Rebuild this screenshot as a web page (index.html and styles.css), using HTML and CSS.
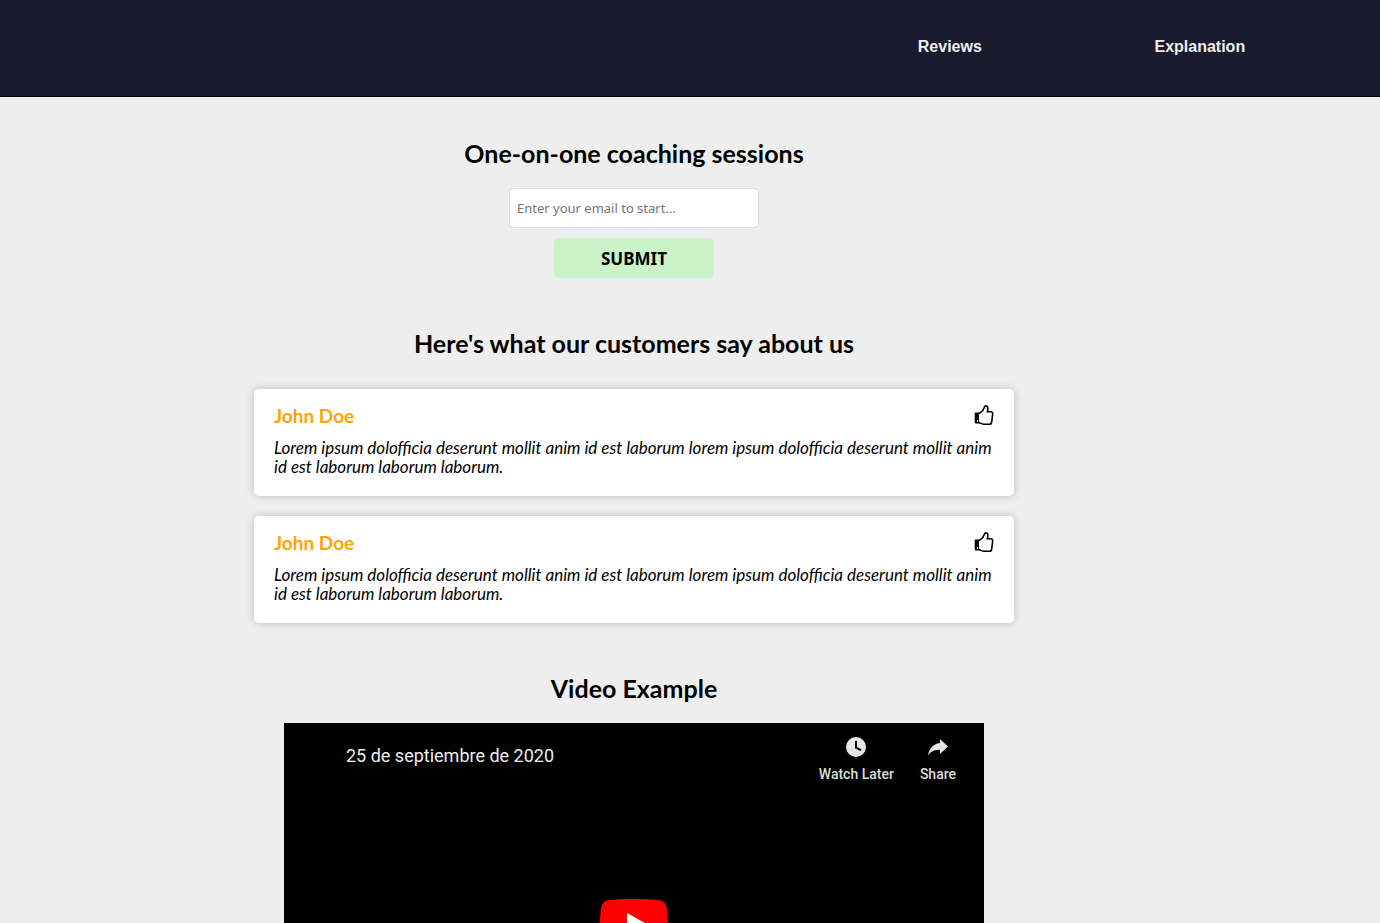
FILE: index.html
```html
<!DOCTYPE html>
<html lang="en">
<head>
<meta charset="utf-8">
<meta name="viewport" content="width=device-width, initial-scale=1">
<title>Coaching sessions</title>
<link rel="stylesheet" href="styles.css">
</head>
<body>
<header class="header">
  <nav class="nav">
    <a class="nav-link" href="#reviews">Reviews</a>
    <a class="nav-link" href="#explanation">Explanation</a>
  </nav>
</header>
<main class="main">
  <section class="section">
    <h1 class="title">One-on-one coaching sessions</h1>
    <form class="form">
      <input class="email" type="email" aria-label="Email" placeholder="Enter your email to start...">
      <button class="submit" type="submit">SUBMIT</button>
    </form>
  </section>
  <section class="section" id="reviews">
    <h2 class="title">Here's what our customers say about us</h2>
    <div class="cards">
      <article class="card">
        <div class="card-head">
          <h3 class="name">John Doe</h3>
          <svg class="thumb" viewBox="0 0 20 22" aria-hidden="true"><path class="cuff" d="M1 9h4v10H2Q1 19 1 18z"/><path class="hand" d="M1.500 9.200H5.800C8.400 7.500 9.800 5.500 10.500 3Q10.800 1.600 12 1.800C14.200 2.400 14.400 4.800 13.200 7.800H17Q18.900 8 18.700 9.800L17.700 18Q17.300 20.300 15.300 20.200H9.600C7.400 20 6.800 19 5 18.700H2.200Q1.500 18.700 1.500 18Z"/><path class="dot" d="M3 16h1v2H3z"/></svg>
        </div>
        <p class="quote">Lorem ipsum dolofficia deserunt mollit anim id est laborum lorem ipsum dolofficia deserunt mollit anim id est laborum laborum laborum.</p>
      </article>
      <article class="card">
        <div class="card-head">
          <h3 class="name">John Doe</h3>
          <svg class="thumb" viewBox="0 0 20 22" aria-hidden="true"><path class="cuff" d="M1 9h4v10H2Q1 19 1 18z"/><path class="hand" d="M1.500 9.200H5.800C8.400 7.500 9.800 5.500 10.500 3Q10.800 1.600 12 1.800C14.200 2.400 14.400 4.800 13.200 7.800H17Q18.900 8 18.700 9.800L17.700 18Q17.300 20.300 15.300 20.200H9.600C7.400 20 6.800 19 5 18.700H2.200Q1.500 18.700 1.500 18Z"/><path class="dot" d="M3 16h1v2H3z"/></svg>
        </div>
        <p class="quote">Lorem ipsum dolofficia deserunt mollit anim id est laborum lorem ipsum dolofficia deserunt mollit anim id est laborum laborum laborum.</p>
      </article>
    </div>
  </section>
  <section class="section" id="explanation">
    <h2 class="title">Video Example</h2>
    <div class="player">
      <div class="player-bar">
        <a class="video-title" href="#explanation">25 de septiembre de 2020</a>
        <div class="actions">
          <button class="action" type="button">
            <svg class="action-icon" viewBox="0 0 24 24" aria-hidden="true"><path fill-rule="evenodd" d="M12 2a10 10 0 1 0 0 20 10 10 0 0 0 0-20zM11 6h2v6l4.600 2.400-1 1.700L11 13.200z"/></svg>
            Watch Later
          </button>
          <button class="action" type="button">
            <svg class="action-icon" viewBox="0 0 24 24" aria-hidden="true"><path d="M14 4l8 7.500-8 7.500V14.800C8.500 14.800 4.700 16.500 2 20.200 3.100 14.900 6.500 8.900 14 8.100z"/></svg>
            Share
          </button>
        </div>
      </div>
      <button class="play" type="button" aria-label="Play">
        <svg class="play-icon" viewBox="0 0 68 48" aria-hidden="true"><path fill="#f00" d="M66.520 7.740c-.780-2.930-2.490-5.410-5.420-6.190C55.790.130 34 0 34 0S12.210.130 6.900 1.550C3.970 2.330 2.270 4.810 1.480 7.740.060 13.050 0 24 0 24s.060 10.950 1.480 16.260c.780 2.930 2.490 5.410 5.420 6.190C12.210 47.870 34 48 34 48s21.790-.130 27.100-1.550c2.930-.780 4.640-3.260 5.420-6.190C67.940 34.950 68 24 68 24s-.060-10.950-1.480-16.260z"/><path fill="#fff" d="M45 24 27 14v20"/></svg>
      </button>
    </div>
  </section>
</main>
</body>
</html>
```
FILE: styles.css
```css
* {
  box-sizing: border-box;
}

body {
  margin: 0;
  background: #eee;
  color: #000;
  font-family: Lato, sans-serif;
}

.header {
  display: flex;
  justify-content: flex-end;
  padding: 36px 4%;
  background: #1b1b2f;
  border-bottom: 1px solid #000;
}

.nav {
  display: grid;
  grid-template-columns: 250px 250px;
  height: 24px;
}

.nav-link {
  color: #eee;
  font: bold 16px/22px "Liberation Sans", Arial, sans-serif;
  text-align: center;
  text-decoration: none;
}

.main {
  display: flex;
  flex-direction: column;
  align-items: center;
  gap: 50px;
  padding: 41px 112px 40px 0;
}

.section {
  display: flex;
  flex-direction: column;
  align-items: center;
  width: 100%;
  max-width: 760px;
}

.title {
  margin: 0 0 20px;
  font-size: 25px;
  line-height: 30px;
  font-weight: 700;
}

.form {
  display: flex;
  flex-direction: column;
  align-items: center;
  gap: 10px;
}

.email {
  width: 250px;
  height: 40px;
  padding: 0 7px;
  background: #fff;
  border: 1px solid #ddd;
  border-radius: 5px;
  font: 13px "Noto Sans", sans-serif;
}

.email::placeholder {
  color: #757575;
}

.submit {
  width: 160px;
  height: 40px;
  padding: 0;
  background: #caf3c8;
  border: 0;
  border-radius: 5px;
  color: #000;
  font: bold 17px "Noto Sans", sans-serif;
}

.cards {
  display: grid;
  gap: 20px;
  width: 100%;
  padding-top: 11px;
}

.card {
  padding: 15px 20px 20px;
  background: #fff;
  border-radius: 5px;
  box-shadow: 0 0 10px rgba(0, 0, 0, 0.2);
}

.card-head {
  display: flex;
  justify-content: space-between;
  align-items: flex-start;
  margin-bottom: 10px;
}

.name {
  margin: 0;
  color: #ffa500;
  font-size: 19px;
  line-height: 24px;
}

.thumb {
  width: 20px;
  height: 22px;
}

.hand {
  fill: none;
  stroke: #000;
  stroke-width: 1.6;
  stroke-linejoin: round;
}

.dot {
  fill: #fff;
}

.quote {
  margin: 0;
  font-size: 17px;
  line-height: 19px;
  font-style: italic;
}

.player {
  display: grid;
  grid-template-rows: 1fr 48px 1fr;
  width: 100%;
  max-width: 700px;
  height: 400px;
  background: #000;
  font-family: Roboto, sans-serif;
}

.player-bar {
  display: flex;
  justify-content: space-between;
  align-items: flex-start;
  padding: 12px 28px 0 62px;
}

.video-title {
  padding-top: 10px;
  color: #eee;
  font-size: 18px;
  line-height: 22px;
  text-decoration: none;
}

.actions {
  display: flex;
  gap: 26px;
}

.action {
  display: flex;
  flex-direction: column;
  align-items: center;
  gap: 6px;
  padding: 0;
  background: none;
  border: 0;
  color: #ddd;
  font: 500 14px/18px Roboto, sans-serif;
}

.action-icon {
  width: 24px;
  height: 24px;
  fill: #e6e6e6;
}

.play {
  justify-self: center;
  width: 68px;
  height: 48px;
  padding: 0;
  background: none;
  border: 0;
}

.play-icon {
  display: block;
  width: 68px;
  height: 48px;
}
```
